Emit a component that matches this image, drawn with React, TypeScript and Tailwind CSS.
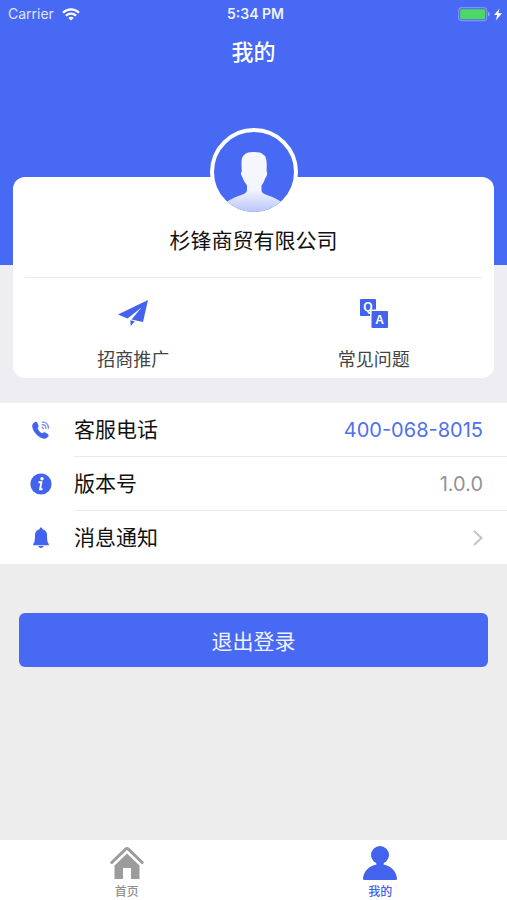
import type { ReactNode } from "react";

function WifiIcon() {
  return (
    <svg width="18" height="13" viewBox="0 0 18 13" fill="none" stroke="white" strokeWidth="2.2" aria-hidden="true">
      <path d="M1 4.8C5.6.2 12.4.2 17 4.8" />
      <path d="M3.9 7.8C6.8 5 11.2 5 14.1 7.8" />
      <path d="M9 12.6 6.3 9.9C7.8 8.5 10.2 8.5 11.7 9.9Z" fill="white" stroke="none" />
    </svg>
  );
}

function BatteryIcon() {
  return (
    <svg width="45" height="15" viewBox="0 0 45 15" aria-hidden="true">
      <rect x="0.7" y="0.7" width="28" height="13" rx="3.2" fill="none" stroke="#7f95f8" strokeWidth="1.2" />
      <rect x="2.2" y="2.2" width="25" height="10" rx="1.2" fill="#4cd964" />
      <path d="M30 5c2.400.6 2.400 3.800 0 4.400Z" fill="#93a5f8" />
      <path d="M41.500 1.500 36 8h3.200l-1.400 5.500L44 6.300h-3.600Z" fill="white" />
    </svg>
  );
}

function Avatar() {
  return (
    <svg className="block size-full" viewBox="0 0 80 80" aria-hidden="true">
      <defs>
        <linearGradient id="bust" x1="0" y1="0" x2="0" y2="1">
          <stop offset="0" stopColor="#f7f8fc" />
          <stop offset="0.6" stopColor="#f3f5fc" />
          <stop offset="1" stopColor="#b4c1fa" />
        </linearGradient>
        <clipPath id="disc">
          <circle cx="40" cy="40" r="40" />
        </clipPath>
      </defs>
      <g clipPath="url(#disc)">
        <path
          fill="url(#bust)"
          d="M27.500 30C27.500 23 32 20 39 20C44 20 47.500 20.500 49 22.500C52.500 23.500 53.200 30 52.500 39.500C53.700 40 53.200 43.500 52 45C51 46 50.500 48.500 49.500 50.500L47.500 53.500V57.500C47.500 60.500 49 61.500 53 63C60 65.500 64.500 67.500 69 71.500V82H11V71.500C15.500 67.500 20 65.500 27 63C31 61.500 33 60.500 33 57.500V53.500L31 50.500C29.500 48.500 29 46 28.300 45C27 43.500 26.500 40 27.800 39.500C27.500 36 27.500 33 27.500 30Z"
        />
      </g>
    </svg>
  );
}

function PlaneIcon() {
  return (
    <svg width="30" height="28" viewBox="0 0 30 28" fill="#4362ed" aria-hidden="true">
      <path d="M30 0 0 14.500l9.500 4L23.500 7.500 13.500 19.500 25 22Z" />
      <path d="m12.300 20.300 4.500.9-4.100 4.800Z" />
    </svg>
  );
}

function QaIcon() {
  return (
    <svg width="30" height="30" viewBox="0 0 30 30" aria-hidden="true">
      <path fill="#4362ed" d="M2 0h14q1 0 1 1v9.500h-4.500q-1.500 0-1.500 1.500V17H2q-1 0-1-1V1q0-1 1-1Z" />
      <rect x="12.500" y="12" width="16.500" height="17" rx="1" fill="#4362ed" />
      <g fill="white" textAnchor="middle" fontSize="12" fontWeight="700" fontFamily="Liberation Sans, sans-serif">
        <text x="9" y="12">Q</text>
        <text x="20.500" y="25">A</text>
      </g>
    </svg>
  );
}

function PhoneIcon() {
  return (
    <svg width="18" height="18" viewBox="0 0 18 18" aria-hidden="true">
      <path
        fill="#4362ed"
        d="M2.200 1.500C3.400.5 4.800.7 5.400 1.900L6.400 4.400C6.900 5.600 6.400 6.200 5.600 6.900C5.600 8.300 8.200 11.500 10.500 12.300C11.400 11.300 12 10.900 13.200 11.500L15.700 13C16.900 13.900 16.800 14.800 16 15.800C14.200 17.900 12 18.200 9.300 16.900C5.100 14.900 1 9.900.3 5.900C0 4 .9 2.500 2.200 1.500Z"
      />
      <g fill="none" stroke="#7f94f3" strokeWidth="1.400" strokeLinecap="round">
        <path d="M10.500 1.200C14 .8 16.600 3.500 16.400 7.200" />
        <path d="M10.200 3.700C12.500 3.500 14 5 13.900 7.300" />
        <path d="M10.200 6.200 11.400 7.400" />
      </g>
    </svg>
  );
}

function InfoIcon() {
  return (
    <svg width="22" height="22" viewBox="0 0 22 22" aria-hidden="true">
      <circle cx="11" cy="11" r="10.600" fill="#4362ed" />
      <circle cx="12" cy="5.700" r="1.700" fill="white" />
      <path d="M8.500 9.300h2.900l-1.300 6.900h2.400" fill="none" stroke="white" strokeWidth="1.900" />
    </svg>
  );
}

function BellIcon() {
  return (
    <svg width="16" height="22" viewBox="0 0 16 22" fill="#4362ed" aria-hidden="true">
      <path d="M6.500 2.200C6.500 0 9.500 0 9.500 2.200C12.500 3 14 5.200 14 8C14 12.500 14.200 15 15.800 17V18.300H.2V17C1.800 15 2 12.500 2 8C2 5.200 3.500 3 6.500 2.200Z" />
      <path d="M5.300 19h5.400C10 21.600 6 21.600 5.300 19Z" />
    </svg>
  );
}

function HomeIcon() {
  return (
    <svg width="34" height="34" viewBox="0 0 34 34" aria-hidden="true">
      <path d="M1.800 16.500 15.600 3.200q1.400-1.200 2.800 0L32.200 16.500" fill="none" stroke="#9c9c9c" strokeWidth="3" strokeLinecap="round" />
      <path d="M17 7.500 29.500 19.500V33H21V22h-8v11H4.500V19.500Z" fill="#9c9c9c" />
    </svg>
  );
}

function UserIcon() {
  return (
    <svg width="34" height="34" viewBox="0 0 34 34" fill="#4362ed" aria-hidden="true">
      <circle cx="17" cy="9" r="9" />
      <path d="M13 16h8l-.5 2.500C28 20 33 25 34 32q.2 2-1.500 2h-31Q-.2 34 0 32C1 25 6 20 13.500 18.500Z" />
    </svg>
  );
}

function Row({ icon, label, children, last }: { icon: ReactNode; label: string; children: ReactNode; last?: boolean }) {
  return (
    <li className={`flex items-stretch ${last ? "h-[53px]" : "h-[54px]"}`}>
      <span className="flex w-[74px] items-center pl-[30px]">
        <span className="flex w-[22px] justify-center">{icon}</span>
      </span>
      <div className={`flex flex-1 items-center justify-between pr-6 ${last ? "" : "border-b border-[#e9e9eb]"}`}>
        <span className="pt-px text-[21px] leading-7 text-[#111111]">{label}</span>
        {children}
      </div>
    </li>
  );
}

export default function App() {
  return (
    <div className="flex min-h-screen flex-col bg-[#ededed] font-['Inter','Noto_Sans_CJK_SC',sans-serif]">
      <header className="h-[265px] bg-[#4869f3] text-white">
        <div className="grid h-7 grid-cols-3 items-center pr-1 pl-2 text-[14px] leading-5">
          <div className="flex items-center gap-2 text-[#dfe5fd]">
            <span>Carrier</span>
            <WifiIcon />
          </div>
          <span className="text-center font-semibold text-[#eef1fe]">5:34 PM</span>
          <span className="flex justify-end">
            <BatteryIcon />
          </span>
        </div>
        <h1 className="pt-2 text-center text-[22px] leading-8 font-medium">我的</h1>
      </header>

      <main className="flex-1">
        <div className="bg-[#eeeef2] px-[13px] pb-[25px]">
          <section className="relative -top-[88px] -mb-[88px] rounded-xl bg-white px-3">
            <div className="flex flex-col items-center border-b border-[#ececee] pb-[22px]">
              <div className="-mt-[49px] size-[88px] rounded-full border-4 border-white bg-[#4869f3]">
                <Avatar />
              </div>
              <h2 className="mt-[11px] text-[21px] leading-7 text-[#111111]">杉锋商贸有限公司</h2>
            </div>
            <div className="-mx-3 grid grid-cols-2 pt-5 pb-1 text-[18px] leading-7 text-[#444444]">
              <button type="button" className="flex flex-col items-center gap-4">
                <span className="flex h-8 items-center">
                  <PlaneIcon />
                </span>
                招商推广
              </button>
              <button type="button" className="flex flex-col items-center gap-4">
                <span className="flex h-8 items-center">
                  <QaIcon />
                </span>
                常见问题
              </button>
            </div>
          </section>
        </div>

        <ul className="bg-white">
          <Row icon={<PhoneIcon />} label="客服电话">
            <a href="tel:400-068-8015" className="text-[20px] leading-7 text-[#4f6fee]">
              400-068-8015
            </a>
          </Row>
          <Row icon={<InfoIcon />} label="版本号">
            <span className="text-[20px] leading-7 text-[#939393]">1.0.0</span>
          </Row>
          <Row icon={<BellIcon />} label="消息通知" last>
            <button type="button" aria-label="消息通知">
              <svg width="10" height="16" viewBox="0 0 10 16" fill="none" stroke="#c4c4c8" strokeWidth="2" aria-hidden="true">
                <path d="m1 1 7.500 7L1 15" />
              </svg>
            </button>
          </Row>
        </ul>

        <div className="px-[19px] pt-[49px] pb-6">
          <button type="button" className="h-[54px] w-full rounded-md bg-[#4869f3] pt-1 text-[21px] leading-7 text-[#eef1fe]">
            退出登录
          </button>
        </div>
      </main>

      <nav className="grid h-[60px] grid-cols-2 bg-white text-[12px] leading-4 font-medium">
        <a href="#home" className="flex flex-col items-center gap-1 pt-[6px] text-[#8f8f8f]">
          <HomeIcon />
          首页
        </a>
        <a href="#mine" className="flex flex-col items-center gap-1 pt-[6px] text-[#4362ed]" aria-current="page">
          <UserIcon />
          我的
        </a>
      </nav>
    </div>
  );
}
